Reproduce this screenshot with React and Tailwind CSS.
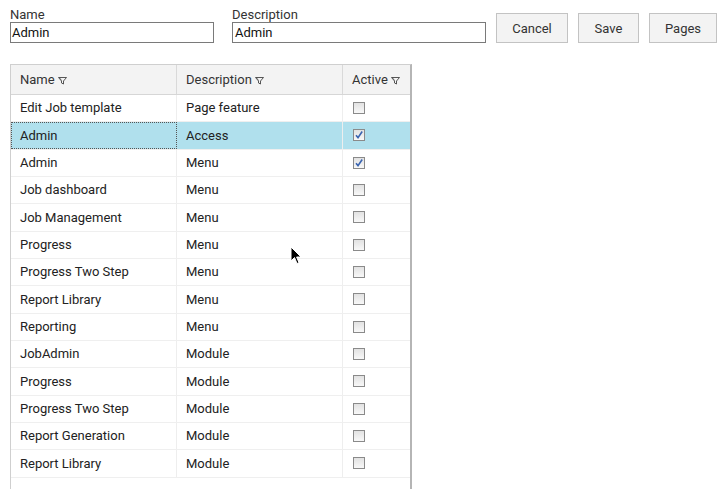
import React from "react";

const rows = [
  ["Edit Job template", "Page feature", false],
  ["Admin", "Access", true, true],
  ["Admin", "Menu", true],
  ["Job dashboard", "Menu", false],
  ["Job Management", "Menu", false],
  ["Progress", "Menu", false],
  ["Progress Two Step", "Menu", false],
  ["Report Library", "Menu", false],
  ["Reporting", "Menu", false],
  ["JobAdmin", "Module", false],
  ["Progress", "Module", false],
  ["Progress Two Step", "Module", false],
  ["Report Generation", "Module", false],
  ["Report Library", "Module", false],
];

function Funnel() {
  return (
    <svg width="9" height="9" viewBox="0 0 9 9" className="ml-[3px] mt-[1px]">
      <path d="M0.5 1.5 H8.5 L5.5 5 V8 L3.5 7 V5 Z" fill="none" stroke="#444" strokeWidth="0.9" strokeLinejoin="round" />
      <path d="M1.5 1.5 L3.5 4.5" stroke="#444" strokeWidth="0.6" fill="none" />
    </svg>
  );
}

function Check({ checked }) {
  return (
    <div className="w-[12px] h-[12px] border border-[#8a8a8a] bg-gradient-to-b from-[#e2e2e2] to-[#f8f8f8] flex items-center justify-center">
      {checked && (
        <svg width="10" height="10" viewBox="0 0 10 10">
          <path d="M2 5.2 L4 7.6 L8.2 1.5" fill="none" stroke="#3a64b0" strokeWidth="1.6" />
        </svg>
      )}
    </div>
  );
}

export default function App() {
  return (
    <div className="relative w-[724px] h-[489px] overflow-hidden bg-white text-[#222] font-['Roboto',sans-serif] text-[13px]">
      <div className="flex items-start pl-[10px] pt-[7px]">
        <div className="flex flex-col w-[204px]">
          <div className="text-[13px] leading-[15px] text-[#333]">Name</div>
          <div className="h-[21px] border border-[#7a7a7a] flex items-center px-[1px] text-[13px] text-[#111]">Admin</div>
        </div>
        <div className="flex flex-col w-[254px] ml-[18px]">
          <div className="text-[13px] leading-[15px] text-[#333]">Description</div>
          <div className="h-[21px] border border-[#7a7a7a] flex items-center px-[2px] text-[13px] text-[#111]">Admin</div>
        </div>
        <div className="flex gap-[10px] ml-[10px] mt-[6px]">
          <button className="w-[72px] h-[30px] pt-[1px] border border-[#c3c3c3] bg-[#f3f3f3] text-[13px] text-[#333]">Cancel</button>
          <button className="w-[61px] h-[30px] pt-[1px] border border-[#c3c3c3] bg-[#f3f3f3] text-[13px] text-[#333]">Save</button>
          <button className="w-[68px] h-[30px] pt-[1px] border border-[#c3c3c3] bg-[#f3f3f3] text-[13px] text-[#333]">Pages</button>
        </div>
      </div>

      <div className="ml-[10px] mt-[21px] w-[402px] h-[460px] border-l border-t border-[#cfcfcf] border-r-2 border-r-[#b5b5b5]">
        <div className="flex h-[30px] bg-[#f3f3f3] border-b border-[#d6d6d6]">
          <div className="w-[166px] flex items-center pl-[9px] border-r border-[#d9d9d9] text-[#333]">Name<Funnel /></div>
          <div className="w-[166px] flex items-center pl-[9px] border-r border-[#d9d9d9] text-[#333]">Description<Funnel /></div>
          <div className="flex-1 flex items-center pl-[9px] text-[#333]">Active<Funnel /></div>
        </div>
        {rows.map(([n, d, c, sel], i) => (
          <div key={i} className={`flex h-[27.33px] border-b border-[#efefef] ${sel ? "bg-[#b0e0ed]" : "bg-white"}`}>
            <div className={`w-[166px] flex items-center ${sel ? "pl-[8px] border border-dotted border-[#555]" : "pl-[9px] border-r border-[#eeeeee]"}`}>{n}</div>
            <div className="w-[166px] flex items-center pl-[9px] border-r border-[#eeeeee]">{d}</div>
            <div className="flex-1 flex items-center pl-[10px]"><Check checked={c} /></div>
          </div>
        ))}
      </div>

      <svg className="absolute left-[290px] top-[246px]" width="12" height="19" viewBox="0 0 12 19">
        <path d="M1 1 L1 15 L4.5 11.5 L7 17.5 L9 16.7 L6.6 11 L11 11 Z" fill="#000" stroke="#fff" strokeWidth="1" />
      </svg>
    </div>
  );
}
